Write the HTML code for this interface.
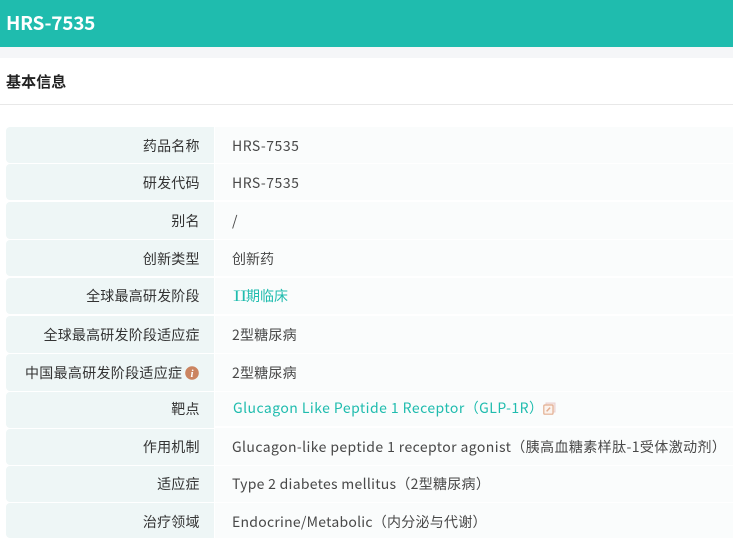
<!DOCTYPE html>
<html><head><meta charset="utf-8">
<style>
html,body{margin:0;padding:0;width:733px;height:538px;overflow:hidden;background:#fff;font-family:"Noto Sans CJK SC","Liberation Sans",sans-serif;}
.a{position:absolute;white-space:nowrap}
.hdr{left:0;top:0;width:733px;height:47px;background:#1fbcae}
.gap{left:0;top:47px;width:733px;height:11px;background:#f5f6f8}
.title{left:6px;top:9px;font-size:19px;line-height:28px;font-weight:700;color:#fff;letter-spacing:-.25px}
.sec{left:6px;top:71px;font-size:15px;line-height:21px;font-weight:700;color:#222;letter-spacing:.1px}
.line{left:0;top:104px;width:733px;height:1px;background:#e8e8e8}
.l{left:6px;width:208px;background:#eef6f6;border-radius:4px 0 0 4px}
.r{left:215px;width:518px;background:#fafcfc}
.t{font-size:14px;line-height:20px;color:#333;letter-spacing:.2px}
.k{right:533.3px}
.v{left:232px;color:#484848}
.g{color:#1fbcae}
</style></head><body>
<div class="a hdr"></div><div class="a gap"></div>
<div class="a title">HRS-7535</div>
<div class="a sec">基本信息</div>
<div class="a line"></div>

<div class="a l" style="top:127px;height:36px"></div><div class="a r" style="top:127px;height:36px"></div>
<div class="a l" style="top:164px;height:36px"></div><div class="a r" style="top:164px;height:36px"></div>
<div class="a l" style="top:202px;height:37px"></div><div class="a r" style="top:202px;height:37px"></div>
<div class="a l" style="top:240px;height:36px"></div><div class="a r" style="top:240px;height:36px"></div>
<div class="a l" style="top:278px;height:36px"></div><div class="a r" style="top:278px;height:36px"></div>
<div class="a l" style="top:316px;height:37px"></div><div class="a r" style="top:316px;height:37px"></div>
<div class="a l" style="top:354px;height:37px"></div><div class="a r" style="top:354px;height:37px"></div>
<div class="a l" style="top:392px;height:36px"></div><div class="a r" style="top:392px;height:34px"></div>
<div class="a l" style="top:429px;height:36px"></div><div class="a r" style="top:428px;height:37px"></div>
<div class="a l" style="top:466px;height:36px"></div><div class="a r" style="top:466px;height:36px"></div>
<div class="a l" style="top:503px;height:35px"></div><div class="a r" style="top:503px;height:35px"></div>

<div class="a t k" style="top:136px">药品名称</div><div class="a t v" style="top:136px;letter-spacing:.5px">HRS-7535</div>
<div class="a t k" style="top:173px">研发代码</div><div class="a t v" style="top:173px;letter-spacing:.5px">HRS-7535</div>
<div class="a t k" style="top:211px">别名</div><div class="a t v" style="top:211px">/</div>
<div class="a t k" style="top:249px">创新类型</div><div class="a t v" style="top:249px;letter-spacing:0">创新药</div>
<div class="a t k" style="top:286px">全球最高研发阶段</div>
<div class="a t v g" style="top:286px;left:233px;width:13px;text-align:center;letter-spacing:0;font-family:'Noto Serif CJK SC',serif;transform:scaleX(1.5)">Ⅱ</div>
<div class="a t v g" style="top:286px;left:246px;letter-spacing:0">期临床</div>
<div class="a t k" style="top:325px">全球最高研发阶段适应症</div><div class="a t v" style="top:325px">2型糖尿病</div>
<div class="a t" style="top:363px;left:25px;letter-spacing:.3px">中国最高研发阶段适应症</div>
<svg class="a" style="left:185px;top:366px" width="14" height="14" viewBox="0 0 14 14"><circle cx="7" cy="7" r="6.8" fill="#cb8460"/><text x="7" y="11" text-anchor="middle" font-family="Liberation Serif,serif" font-style="italic" font-weight="700" font-size="11" fill="#fff">i</text></svg>
<div class="a t v" style="top:363px">2型糖尿病</div>
<div class="a t k" style="top:399px">靶点</div><div class="a t v g" style="top:398px;left:233px;letter-spacing:.45px">Glucagon Like Peptide 1 Receptor（GLP-1R）</div>
<svg class="a" style="left:543px;top:402px" width="13" height="13" viewBox="0 0 13 13" fill="none"><path d="M3 2.500V1h9v9h-1.500" fill="#f4e6e2" stroke="#ead0d0" stroke-width="1"/><rect x=".8" y="3" width="9.200" height="9.200" rx="1" fill="#fbf3ee" stroke="#e3ae90" stroke-width="1.200"/><path d="M3.600 9.400l3.500-3.800" stroke="#e3ae90" stroke-width="1.500"/></svg>
<div class="a t k" style="top:437px">作用机制</div><div class="a t v" style="top:437px;letter-spacing:.4px">Glucagon-like peptide 1 receptor agonist（胰高血糖素样肽-1受体激动剂）</div>
<div class="a t k" style="top:474px">适应症</div><div class="a t v" style="top:474px;letter-spacing:.28px">Type 2 diabetes mellitus（2型糖尿病）</div>
<div class="a t k" style="top:512px">治疗领域</div><div class="a t v" style="top:512px;letter-spacing:.25px">Endocrine/Metabolic（内分泌与代谢）</div>
</body></html>
